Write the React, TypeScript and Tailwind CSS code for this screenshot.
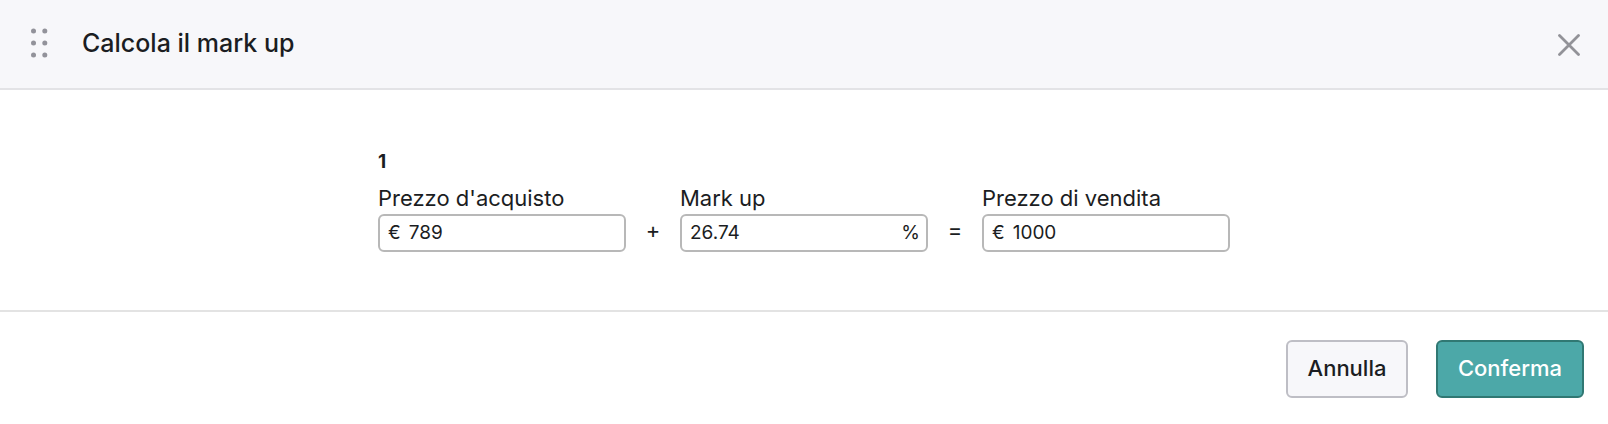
import type { ReactNode } from 'react';

interface PriceFieldProps {
  id: string;
  label: string;
  value: string;
  prefix?: string;
  suffix?: string;
}

function PriceField({ id, label, value, prefix, suffix }: PriceFieldProps) {
  return (
    <div className="w-62">
      <label htmlFor={id} className="block text-[22px] leading-8 whitespace-nowrap">
        {label}
      </label>
      <div className="flex h-[38px] items-center gap-2 rounded-md border-2 border-[#b8b8b8] bg-white pr-1.5 pl-2 text-[19px] leading-6">
        {prefix && <span>{prefix}</span>}
        <input id={id} defaultValue={value} className="w-full min-w-0 flex-1 bg-transparent outline-none" />
        {suffix && <span>{suffix}</span>}
      </div>
    </div>
  );
}

function Operator({ children }: { children: ReactNode }) {
  return (
    <span className="flex h-[38px] w-[54px] items-center justify-center pb-1.5 text-[22px] leading-6">{children}</span>
  );
}

function DragHandle() {
  return (
    <svg width="18" height="30" viewBox="0 0 18 30" fill="#92929a" aria-hidden="true">
      <circle cx="3.5" cy="3" r="2.5" />
      <circle cx="14.8" cy="3" r="2.5" />
      <circle cx="3.5" cy="15" r="2.5" />
      <circle cx="14.8" cy="15" r="2.5" />
      <circle cx="3.5" cy="27" r="2.5" />
      <circle cx="14.8" cy="27" r="2.5" />
    </svg>
  );
}

export default function App() {
  return (
    <div className="min-h-screen bg-white font-['Inter',sans-serif] text-[#1b1d22]">
      <header className="flex h-[90px] items-center justify-between border-b-2 border-[#e3e3e6] bg-[#f7f7fa] pr-7 pl-[30px]">
        <div className="flex items-center gap-[34px] pb-0.5">
          <DragHandle />
          <h1 className="text-[25px] leading-8 font-medium">Calcola il mark up</h1>
        </div>
        <button type="button" aria-label="Chiudi" className="pt-0.5">
          <svg width="22" height="22" viewBox="0 0 22 22" stroke="#929298" strokeWidth="2.8" strokeLinecap="round">
            <path d="M1.5 1.5 20.5 20.5M20.5 1.5 1.5 20.5" />
          </svg>
        </button>
      </header>

      <main className="flex justify-center border-b-2 border-[#e3e3e3] pt-14 pb-[58px]">
        <div>
          <p className="text-[19px] leading-8 font-bold">1</p>
          <div className="mt-1 flex items-end">
            <PriceField id="purchase" label="Prezzo d'acquisto" value="789" prefix="€" />
            <Operator>+</Operator>
            <PriceField id="markup" label="Mark up" value="26.74" suffix="%" />
            <Operator>=</Operator>
            <PriceField id="sale" label="Prezzo di vendita" value="1000" prefix="€" />
          </div>
        </div>
      </main>

      <footer className="flex justify-end gap-7 px-6 py-7">
        <button
          type="button"
          className="h-[58px] w-[122px] rounded-md border-2 border-[#bebec5] bg-[#f7f7fa] pb-0.5 text-[22px] font-medium"
        >
          Annulla
        </button>
        <button
          type="button"
          className="h-[58px] w-[148px] rounded-md border-2 border-[#307873] bg-[#4ca8a8] pb-0.5 text-[22px] font-medium text-white"
        >
          Conferma
        </button>
      </footer>
    </div>
  );
}
